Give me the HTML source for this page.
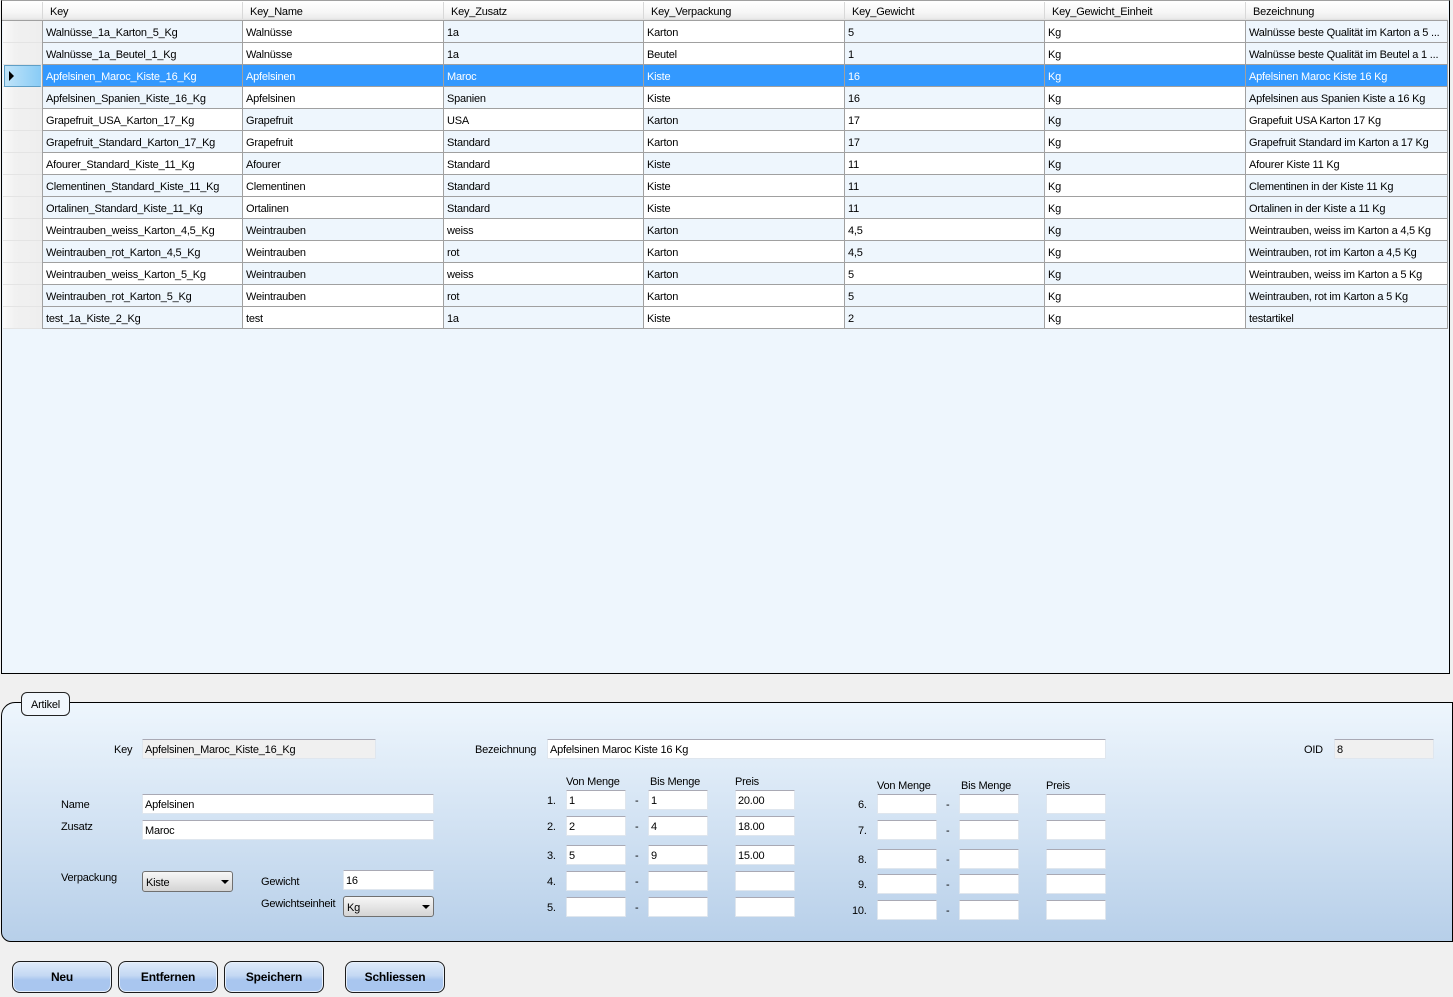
<!DOCTYPE html>
<html lang="de"><head><meta charset="utf-8"><title>Artikel</title>
<style>
html,body{margin:0;padding:0}
body{position:relative;width:1453px;height:997px;overflow:hidden;background:#f0f0f0;font:11px/18px "Liberation Sans",sans-serif;letter-spacing:-.22px;color:#000}
div,span{position:absolute;box-sizing:border-box;white-space:nowrap}
#grid{left:1px;top:0;width:1449px;height:674px;background:#eef6fd;border:1px solid #000;border-top:1px solid #a0a0a0}
#hdr{left:2px;top:1px;width:1446px;height:19px;background:linear-gradient(#fff,#f6f6f6 60%,#ececec 90%,#ddd)}
#hline{left:2px;top:20px;width:1446px;height:1px;background:#a0a0a0}
.hs{top:2px;width:1px;height:17px;background:#d8d8d8}
.h{top:3px;font-size:11px;line-height:16px;margin-top:1px}
#rh{left:3px;top:21px;width:39px;height:308px;background:repeating-linear-gradient(transparent 0,transparent 21px,#e4e4e4 21px,#e4e4e4 22px),linear-gradient(90deg,#fbfbfb,#f1f1f1 30%,#eeeeee)}
#sel{left:4px;top:65px;width:37px;height:22px;background:linear-gradient(90deg,#bfe3f8,#8accf6);border:1px solid #5f9fc6;border-right-color:#8accf6;border-bottom-width:1px}
#arr{left:9px;top:71px;width:0;height:0;border-left:5px solid #000;border-top:5px solid transparent;border-bottom:5px solid transparent}
#vl{left:42px;top:20px;width:1px;height:309px;background:#a0a0a0}
table{position:absolute;left:43px;top:21px;border-collapse:separate;border-spacing:0;table-layout:fixed;width:1405px}
td{height:18px;padding:3px 0 0 3px;border-right:1px solid #a0a0a0;border-bottom:1px solid #a0a0a0;background:#fff;white-space:nowrap;overflow:hidden;line-height:18px;font-size:11px}
tr.ra td:nth-child(odd),tr.rb td:nth-child(even){background:#eef6fd}
tr.rs td{background:#3399ff;color:#fff}
#panel{left:1px;top:702px;width:1452px;height:240px;background:linear-gradient(#eef6fd,#b7cfe9);border:1px solid #000;border-radius:14px 0 0 10px}
#leg{left:21px;top:692px;width:49px;height:24px;background:#f1f7fd;border:1px solid #222;border-radius:6px;text-align:center;line-height:24px}
.l{line-height:18px}
.f{background:#fff;border:1px solid #dfe6ee;border-top:1px solid #a9a9b4;border-radius:1px;padding:0 0 0 2px;line-height:20px}
.g{background:#f0f0f0}
.cb{background:linear-gradient(#f7f7f7,#d4d4d4);border:1px solid #707070;border-radius:3px;padding:0 0 0 3px;line-height:23px}
.cb i{position:absolute;right:3px;top:8px;width:0;height:0;border-top:4px solid #000;border-left:4px solid transparent;border-right:4px solid transparent}
.btn{top:961px;width:100px;height:32px;border:1px solid #1c1c1c;border-radius:8px;background:linear-gradient(#e0ecfa,#c4d8f3 45%,#a9c6ef 60%,#a9c6ef);box-shadow:inset 0 0 0 1px #e8f0fa;text-align:center;font-weight:bold;line-height:30px;font-size:12px;letter-spacing:-.2px}
</style></head><body>
<div id="grid"></div>
<div id="hdr"></div>
<div id="hline"></div>
<div class="hs" style="left:42px"></div><div class="hs" style="left:242px"></div><div class="hs" style="left:443px"></div><div class="hs" style="left:643px"></div><div class="hs" style="left:844px"></div><div class="hs" style="left:1044px"></div><div class="hs" style="left:1245px"></div>
<span class="h" style="left:50px">Key</span>
<span class="h" style="left:250px">Key_Name</span>
<span class="h" style="left:451px">Key_Zusatz</span>
<span class="h" style="left:651px">Key_Verpackung</span>
<span class="h" style="left:852px">Key_Gewicht</span>
<span class="h" style="left:1052px">Key_Gewicht_Einheit</span>
<span class="h" style="left:1253px">Bezeichnung</span>
<div id="rh"></div>
<div id="sel"></div>
<div id="arr"></div>
<div id="vl"></div>
<table>
<colgroup><col style="width:200px"><col style="width:201px"><col style="width:200px"><col style="width:201px"><col style="width:200px"><col style="width:201px"><col style="width:202px"></colgroup>
<tr class="ra"><td>Walnüsse_1a_Karton_5_Kg</td><td>Walnüsse</td><td>1a</td><td>Karton</td><td>5</td><td>Kg</td><td>Walnüsse beste Qualität im Karton a 5 ...</td></tr>
<tr class="ra"><td>Walnüsse_1a_Beutel_1_Kg</td><td>Walnüsse</td><td>1a</td><td>Beutel</td><td>1</td><td>Kg</td><td>Walnüsse beste Qualität im Beutel a 1 ...</td></tr>
<tr class="rs"><td>Apfelsinen_Maroc_Kiste_16_Kg</td><td>Apfelsinen</td><td>Maroc</td><td>Kiste</td><td>16</td><td>Kg</td><td>Apfelsinen Maroc Kiste 16 Kg</td></tr>
<tr class="ra"><td>Apfelsinen_Spanien_Kiste_16_Kg</td><td>Apfelsinen</td><td>Spanien</td><td>Kiste</td><td>16</td><td>Kg</td><td>Apfelsinen aus Spanien Kiste a 16 Kg</td></tr>
<tr class="rb"><td>Grapefruit_USA_Karton_17_Kg</td><td>Grapefruit</td><td>USA</td><td>Karton</td><td>17</td><td>Kg</td><td>Grapefuit USA Karton 17 Kg</td></tr>
<tr class="ra"><td>Grapefruit_Standard_Karton_17_Kg</td><td>Grapefruit</td><td>Standard</td><td>Karton</td><td>17</td><td>Kg</td><td>Grapefruit Standard im Karton a 17 Kg</td></tr>
<tr class="rb"><td>Afourer_Standard_Kiste_11_Kg</td><td>Afourer</td><td>Standard</td><td>Kiste</td><td>11</td><td>Kg</td><td>Afourer Kiste 11 Kg</td></tr>
<tr class="ra"><td>Clementinen_Standard_Kiste_11_Kg</td><td>Clementinen</td><td>Standard</td><td>Kiste</td><td>11</td><td>Kg</td><td>Clementinen in der Kiste 11 Kg</td></tr>
<tr class="ra"><td>Ortalinen_Standard_Kiste_11_Kg</td><td>Ortalinen</td><td>Standard</td><td>Kiste</td><td>11</td><td>Kg</td><td>Ortalinen in der Kiste a 11 Kg</td></tr>
<tr class="rb"><td>Weintrauben_weiss_Karton_4,5_Kg</td><td>Weintrauben</td><td>weiss</td><td>Karton</td><td>4,5</td><td>Kg</td><td>Weintrauben, weiss im Karton a 4,5 Kg</td></tr>
<tr class="ra"><td>Weintrauben_rot_Karton_4,5_Kg</td><td>Weintrauben</td><td>rot</td><td>Karton</td><td>4,5</td><td>Kg</td><td>Weintrauben, rot im Karton a 4,5 Kg</td></tr>
<tr class="rb"><td>Weintrauben_weiss_Karton_5_Kg</td><td>Weintrauben</td><td>weiss</td><td>Karton</td><td>5</td><td>Kg</td><td>Weintrauben, weiss im Karton a 5 Kg</td></tr>
<tr class="ra"><td>Weintrauben_rot_Karton_5_Kg</td><td>Weintrauben</td><td>rot</td><td>Karton</td><td>5</td><td>Kg</td><td>Weintrauben, rot im Karton a 5 Kg</td></tr>
<tr class="ra"><td>test_1a_Kiste_2_Kg</td><td>test</td><td>1a</td><td>Kiste</td><td>2</td><td>Kg</td><td>testartikel</td></tr>
</table>

<div id="panel"></div>
<div id="leg">Artikel</div>

<span class="l" style="left:114px;top:741px">Key</span>
<div class="f g" style="left:142px;top:739px;width:234px;height:20px">Apfelsinen_Maroc_Kiste_16_Kg</div>
<span class="l" style="left:475px;top:741px">Bezeichnung</span>
<div class="f" style="left:547px;top:739px;width:559px;height:20px">Apfelsinen Maroc Kiste 16 Kg</div>
<span class="l" style="left:1304px;top:741px">OID</span>
<div class="f g" style="left:1334px;top:739px;width:100px;height:20px">8</div>

<span class="l" style="left:61px;top:796px">Name</span>
<div class="f" style="left:142px;top:794px;width:292px;height:20px">Apfelsinen</div>
<span class="l" style="left:61px;top:818px">Zusatz</span>
<div class="f" style="left:142px;top:820px;width:292px;height:20px">Maroc</div>
<span class="l" style="left:61px;top:869px">Verpackung</span>
<div class="cb" style="left:142px;top:871px;width:91px;height:21px">Kiste<i></i></div>
<span class="l" style="left:261px;top:873px">Gewicht</span>
<div class="f" style="left:343px;top:870px;width:91px;height:20px">16</div>
<span class="l" style="left:261px;top:895px">Gewichtseinheit</span>
<div class="cb" style="left:343px;top:896px;width:91px;height:21px">Kg<i></i></div>

<span class="l" style="left:566px;top:773px">Von Menge</span>
<span class="l" style="left:650px;top:773px">Bis Menge</span>
<span class="l" style="left:735px;top:773px">Preis</span>

<span class="l" style="left:547px;top:792px">1.</span>
<div class="f" style="left:566px;top:790px;width:60px;height:20px">1</div><span class="l" style="left:635px;top:792px">-</span>
<div class="f" style="left:648px;top:790px;width:60px;height:20px">1</div>
<div class="f" style="left:735px;top:790px;width:60px;height:20px">20.00</div>

<span class="l" style="left:547px;top:818px">2.</span>
<div class="f" style="left:566px;top:816px;width:60px;height:20px">2</div><span class="l" style="left:635px;top:818px">-</span>
<div class="f" style="left:648px;top:816px;width:60px;height:20px">4</div>
<div class="f" style="left:735px;top:816px;width:60px;height:20px">18.00</div>

<span class="l" style="left:547px;top:847px">3.</span>
<div class="f" style="left:566px;top:845px;width:60px;height:20px">5</div><span class="l" style="left:635px;top:847px">-</span>
<div class="f" style="left:648px;top:845px;width:60px;height:20px">9</div>
<div class="f" style="left:735px;top:845px;width:60px;height:20px">15.00</div>

<span class="l" style="left:547px;top:873px">4.</span>
<div class="f" style="left:566px;top:871px;width:60px;height:20px"></div><span class="l" style="left:635px;top:873px">-</span>
<div class="f" style="left:648px;top:871px;width:60px;height:20px"></div>
<div class="f" style="left:735px;top:871px;width:60px;height:20px"></div>

<span class="l" style="left:547px;top:899px">5.</span>
<div class="f" style="left:566px;top:897px;width:60px;height:20px"></div><span class="l" style="left:635px;top:899px">-</span>
<div class="f" style="left:648px;top:897px;width:60px;height:20px"></div>
<div class="f" style="left:735px;top:897px;width:60px;height:20px"></div>

<span class="l" style="left:877px;top:777px">Von Menge</span>
<span class="l" style="left:961px;top:777px">Bis Menge</span>
<span class="l" style="left:1046px;top:777px">Preis</span>

<span class="l" style="left:858px;top:796px">6.</span>
<div class="f" style="left:877px;top:794px;width:60px;height:20px"></div><span class="l" style="left:946px;top:796px">-</span>
<div class="f" style="left:959px;top:794px;width:60px;height:20px"></div>
<div class="f" style="left:1046px;top:794px;width:60px;height:20px"></div>

<span class="l" style="left:858px;top:822px">7.</span>
<div class="f" style="left:877px;top:820px;width:60px;height:20px"></div><span class="l" style="left:946px;top:822px">-</span>
<div class="f" style="left:959px;top:820px;width:60px;height:20px"></div>
<div class="f" style="left:1046px;top:820px;width:60px;height:20px"></div>

<span class="l" style="left:858px;top:851px">8.</span>
<div class="f" style="left:877px;top:849px;width:60px;height:20px"></div><span class="l" style="left:946px;top:851px">-</span>
<div class="f" style="left:959px;top:849px;width:60px;height:20px"></div>
<div class="f" style="left:1046px;top:849px;width:60px;height:20px"></div>

<span class="l" style="left:858px;top:876px">9.</span>
<div class="f" style="left:877px;top:874px;width:60px;height:20px"></div><span class="l" style="left:946px;top:876px">-</span>
<div class="f" style="left:959px;top:874px;width:60px;height:20px"></div>
<div class="f" style="left:1046px;top:874px;width:60px;height:20px"></div>

<span class="l" style="left:852px;top:902px">10.</span>
<div class="f" style="left:877px;top:900px;width:60px;height:20px"></div><span class="l" style="left:946px;top:902px">-</span>
<div class="f" style="left:959px;top:900px;width:60px;height:20px"></div>
<div class="f" style="left:1046px;top:900px;width:60px;height:20px"></div>

<div class="btn" style="left:12px">Neu</div>
<div class="btn" style="left:118px">Entfernen</div>
<div class="btn" style="left:224px">Speichern</div>
<div class="btn" style="left:345px">Schliessen</div>
</body></html>
